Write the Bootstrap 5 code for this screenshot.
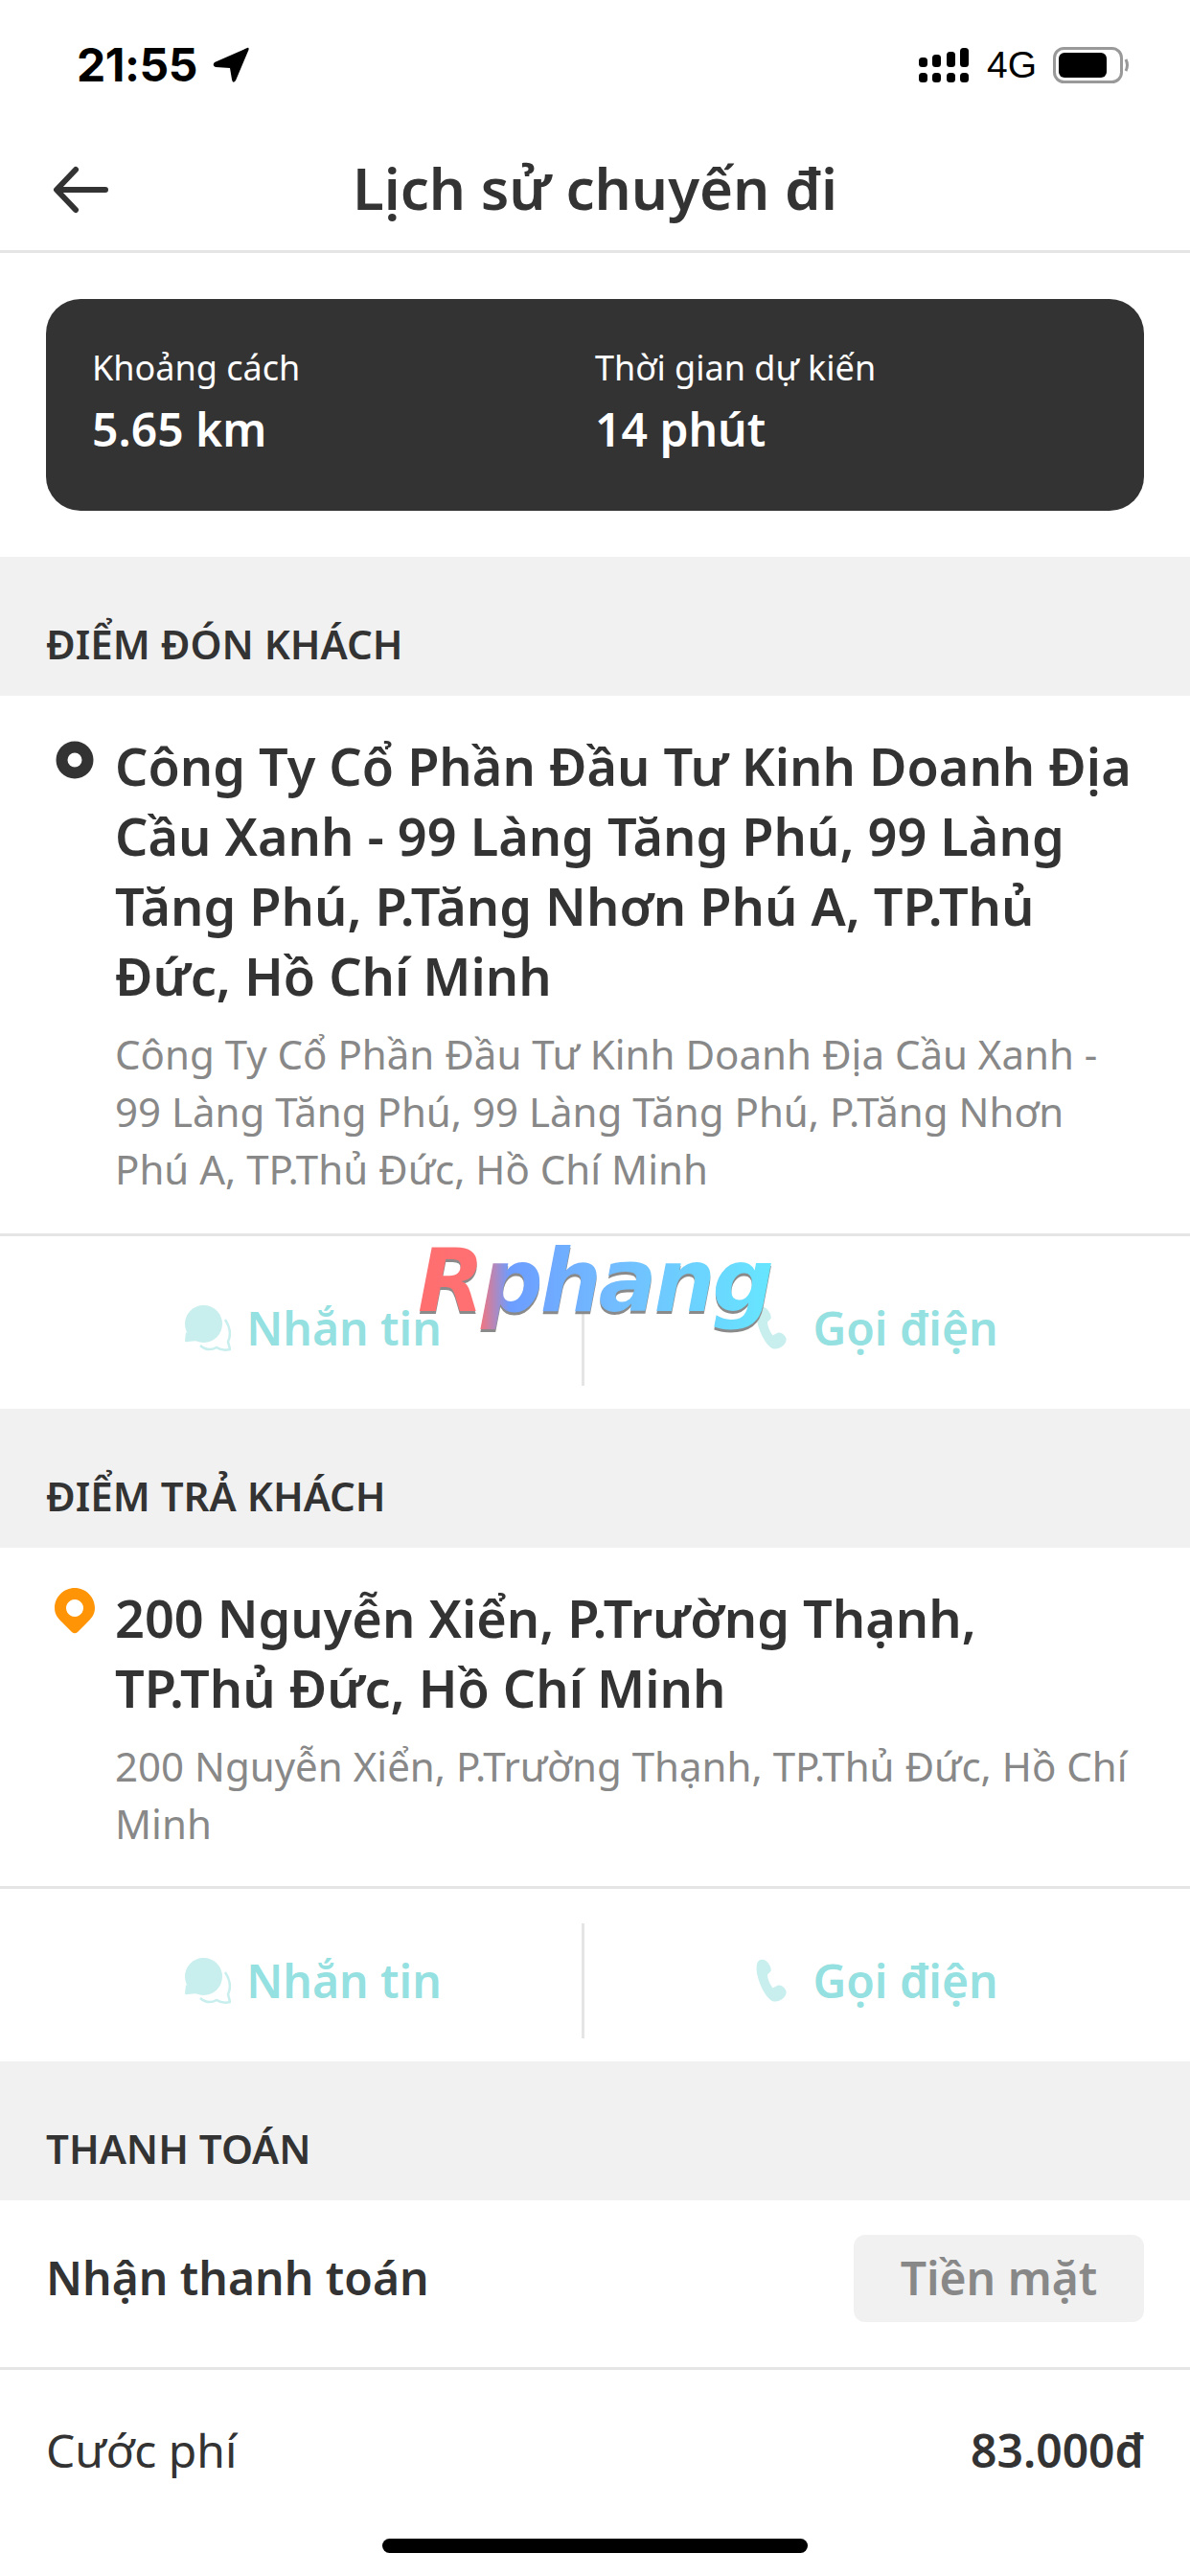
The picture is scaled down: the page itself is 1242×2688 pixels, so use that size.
<!DOCTYPE html>
<html lang="vi">
<head>
  <meta charset="UTF-8" />
  <title>Lịch sử chuyến đi</title>
  <link href="https://cdn.jsdelivr.net/npm/bootstrap@5.3.0/dist/css/bootstrap.min.css" rel="stylesheet" />
  <style>
    html, body { height: 2688px; overflow: hidden; }
    body { background: #fff; color: #333; font-family: "Noto Sans", sans-serif; position: relative; }
    .status-bar { height: 130px; padding: 48px 63px 0 80px; font-family: "Liberation Sans", sans-serif; color: #000; }
    .status-time { font-size: 48px; line-height: 40px; font-weight: 700; font-family: Inter, sans-serif; letter-spacing: -.5px; }
    .status-net { font-size: 39px; line-height: 40px; margin: 0 17px 0 19px; }
    .top-nav { height: 134px; border-bottom: 3px solid #e5e5e5; position: relative; }
    .top-nav svg { position: absolute; left: 55px; top: 43px; }
    .top-nav h1 { font-size: 60px; font-weight: 600; margin: 0; color: #333; line-height: 1; }
    .trip-wrap { padding: 48px; height: 317px; }
    .trip-card { background: #333; border-radius: 36px; height: 221px; padding: 48px 48px 0; color: #fff; }
    .trip-col { width: 525px; }
    .trip-label { font-size: 36px; line-height: 48px; }
    .trip-value { font-size: 48px; line-height: 64px; font-weight: 600; margin-top: 8px; }
    .sec-head { background: #f1f1f1; height: 145px; padding: 66px 48px 0; font-size: 42px; line-height: 50px; font-weight: 600; color: #333; }
    .addr-row { padding: 37px 48px 0; }
    .addr-icon { width: 60px; flex: none; margin-right: 12px; padding-top: 10px; }
    .pin-icon { margin-top: -5px; }
    .addr-title { font-size: 54px; line-height: 73px; font-weight: 600; color: #333; }
    .addr-sub { font-size: 42px; line-height: 60px; color: #888; margin-top: 15px; }
    .addr-block { padding-bottom: 37px; border-bottom: 3px solid #e5e5e5; }
    .addr-short { padding-bottom: 35px; }
    .act-row { height: 180px; padding: 36px 0 24px; }
    .act-cell { font-size: 48px; font-weight: 600; color: #95e0e0; }
    .act-msg { width: 607px; padding-left: 46px; gap: 16px; }
    .act-call { flex: 1; padding-right: 22px; gap: 23px; border-left: 3px solid #e5e5e5; }
    .pay-row { height: 177px; padding: 0 48px 12px; border-bottom: 3px solid #e5e5e5; }
    .pay-label { font-size: 48px; font-weight: 600; }
    .pay-chip { background: #f1f1f1; color: #888; width: 303px; height: 91px; border-radius: 12px; font-size: 48px; font-weight: 600; }
    .fare-row { height: 168px; padding: 0 48px; font-size: 48px; }
    .fare-amount { font-weight: 600; }
    .home-bar { position: absolute; left: 399px; top: 2649px; width: 444px; height: 15px; border-radius: 8px; background: #000; }
    .wm { position: absolute; left: 436px; top: 1272px; font-family: "DejaVu Sans", sans-serif; font-size: 90px; line-height: 130px; font-weight: 700; font-style: italic; letter-spacing: -3px; background: linear-gradient(90deg, #ff6f70 0, #ff7072 17%, #6c9dff 26%, #72bcff 55%, #66e6ff 100%); -webkit-background-clip: text; background-clip: text; color: transparent; filter: drop-shadow(0 3px 0 #8a8a8a); }
  </style>
</head>
<body>

<div class="status-bar d-flex align-items-start justify-content-between">
  <div class="d-flex align-items-center gap-3">
    <span class="status-time">21:55</span>
    <svg width="38" height="38" viewBox="0 0 38 38"><path d="M36 1 Q38 0 37.500 3 L24 35 Q21 39 20 34 L18 22 L3 21 Q-1 19 2 16 Z" fill="#000"/></svg>
  </div>
  <div class="d-flex align-items-center">
    <svg width="52" height="36" viewBox="0 0 52 36" fill="#000">
      <rect x="0" y="10" width="9" height="10" rx="3.500"/><rect x="0" y="26" width="9" height="10" rx="3.500"/>
      <rect x="14" y="7" width="9" height="13" rx="3.500"/><rect x="14" y="26" width="9" height="10" rx="3.500"/>
      <rect x="29" y="4" width="9" height="16" rx="3.500"/><rect x="29" y="26" width="9" height="10" rx="3.500"/>
      <rect x="43" y="0" width="9" height="20" rx="3.500"/><rect x="43" y="26" width="9" height="10" rx="3.500"/>
    </svg>
    <span class="status-net">4G</span>
    <svg width="80" height="38" viewBox="0 0 80 38">
      <rect x="1.500" y="1.500" width="70" height="35" rx="10" fill="none" stroke="#999" stroke-width="3"/>
      <rect x="6" y="6" width="50" height="26" rx="6" fill="#000"/>
      <path d="M76 13 q3 6 0 12" fill="none" stroke="#999" stroke-width="3"/>
    </svg>
  </div>
</div>

<div class="top-nav d-flex align-items-center justify-content-center">
  <svg width="60" height="50" viewBox="0 0 60 50" fill="none" stroke="#333" stroke-width="6" stroke-linecap="round" stroke-linejoin="round"><path d="M55 25 H5 M24 4 L4 25 L24 46"/></svg>
  <h1>Lịch sử chuyến đi</h1>
</div>

<div class="trip-wrap">
  <div class="trip-card d-flex">
    <div class="trip-col">
      <div class="trip-label">Khoảng cách</div>
      <div class="trip-value">5.65 km</div>
    </div>
    <div>
      <div class="trip-label">Thời gian dự kiến</div>
      <div class="trip-value">14 phút</div>
    </div>
  </div>
</div>

<div class="sec-head">ĐIỂM ĐÓN KHÁCH</div>
<div class="addr-block">
  <div class="addr-row d-flex">
    <div class="addr-icon">
      <svg width="40" height="40" viewBox="0 0 40 40" class="d-block mx-auto"><circle cx="20" cy="20" r="19.500" fill="#333"/><circle cx="20" cy="20" r="7.500" fill="#fff"/></svg>
    </div>
    <div>
      <div class="addr-title">Công Ty Cổ Phần Đầu Tư Kinh Doanh Địa Cầu Xanh - 99 Làng Tăng Phú, 99 Làng Tăng Phú, P.Tăng Nhơn Phú A, TP.Thủ Đức, Hồ Chí Minh</div>
      <div class="addr-sub">Công Ty Cổ Phần Đầu Tư Kinh Doanh Địa Cầu Xanh - 99 Làng Tăng Phú, 99 Làng Tăng Phú, P.Tăng Nhơn Phú A, TP.Thủ Đức, Hồ Chí Minh</div>
    </div>
  </div>
</div>
<div class="act-row d-flex">
  <div class="act-cell act-msg d-flex align-items-center justify-content-center">
    <svg width="49" height="48" viewBox="0 0 49 48"><circle cx="20.500" cy="19.500" r="19.500" fill="#c8eeee"/><path d="M2 28 L1 37 Q1 39 4 38 L14 37 Z" fill="#c8eeee"/><path d="M43 15 Q51 27 46 38 L48 46 Q40 48 34 44 Q25 49 17 42" fill="none" stroke="#c8eeee" stroke-width="2.500"/></svg>
    <span>Nhắn tin</span>
  </div>
  <div class="act-cell act-call d-flex align-items-center justify-content-center">
    <svg width="37" height="48" viewBox="0 0 40 50"><path d="M8 1 C3 1 1 6 2 15 C4 28 12 44 20 48 C28 50 37 42 35 36 C33 32 28 28 24 31 L20 33 C16 28 14 22 14 18 L18 14 C19 10 14 1 8 1 Z" fill="#c8eeee"/></svg>
    <span>Gọi điện</span>
  </div>
</div>

<div class="sec-head">ĐIỂM TRẢ KHÁCH</div>
<div class="addr-block addr-short">
  <div class="addr-row d-flex">
    <div class="addr-icon">
      <svg width="42" height="48" viewBox="0 0 42 48" class="d-block mx-auto pin-icon"><path fill-rule="evenodd" d="M21 0 C32.600 0 42 9.400 42 21 C42 28 38 32 34 36 L24 46 Q21 48.500 18 46 L8 36 C4 32 0 28 0 21 C0 9.400 9.400 0 21 0 Z M21 12 a9 9 0 1 0 0.010 0 Z" fill="#ff9506"/></svg>
    </div>
    <div>
      <div class="addr-title">200 Nguyễn Xiển, P.Trường Thạnh, TP.Thủ Đức, Hồ Chí Minh</div>
      <div class="addr-sub">200 Nguyễn Xiển, P.Trường Thạnh, TP.Thủ Đức, Hồ Chí Minh</div>
    </div>
  </div>
</div>
<div class="act-row d-flex">
  <div class="act-cell act-msg d-flex align-items-center justify-content-center">
    <svg width="49" height="48" viewBox="0 0 49 48"><circle cx="20.500" cy="19.500" r="19.500" fill="#c8eeee"/><path d="M2 28 L1 37 Q1 39 4 38 L14 37 Z" fill="#c8eeee"/><path d="M43 15 Q51 27 46 38 L48 46 Q40 48 34 44 Q25 49 17 42" fill="none" stroke="#c8eeee" stroke-width="2.500"/></svg>
    <span>Nhắn tin</span>
  </div>
  <div class="act-cell act-call d-flex align-items-center justify-content-center">
    <svg width="37" height="48" viewBox="0 0 40 50"><path d="M8 1 C3 1 1 6 2 15 C4 28 12 44 20 48 C28 50 37 42 35 36 C33 32 28 28 24 31 L20 33 C16 28 14 22 14 18 L18 14 C19 10 14 1 8 1 Z" fill="#c8eeee"/></svg>
    <span>Gọi điện</span>
  </div>
</div>

<div class="sec-head">THANH TOÁN</div>
<div class="pay-row d-flex align-items-center justify-content-between">
  <span class="pay-label">Nhận thanh toán</span>
  <span class="pay-chip d-flex align-items-center justify-content-center">Tiền mặt</span>
</div>
<div class="fare-row d-flex align-items-center justify-content-between">
  <span>Cước phí</span>
  <span class="fare-amount">83.000đ</span>
</div>

<div class="wm">Rphang</div>
<div class="home-bar"></div>

<script src="https://cdn.jsdelivr.net/npm/bootstrap@5.3.0/dist/js/bootstrap.bundle.min.js"></script>
</body>
</html>
